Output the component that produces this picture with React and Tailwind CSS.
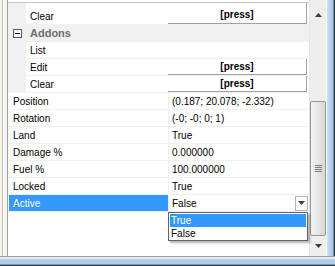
import React from "react";

const ROW = "flex h-[17px] border-b border-[#f0f0f0] leading-[17px]";

const Press = ({ h = "h-[16px]" }) => (
  <div className={`w-[139px] ${h} border-r border-b border-[#a0a0a0] bg-white flex items-center justify-center font-bold`}>
    [press]
  </div>
);

const Arrow = ({ up }) => (
  <svg width="7" height="4" viewBox="0 0 7 4">
    <path d={up ? "M0 4 L3.5 0 L7 4 Z" : "M0 0 L7 0 L3.5 4 Z"} fill="#3c3c3c" />
  </svg>
);

const props = [
  ["Position", "(0.187; 20.078; -2.332)"],
  ["Rotation", "(-0; -0; 0; 1)"],
  ["Land", "True"],
  ["Damage %", "0.000000"],
  ["Fuel %", "100.000000"],
  ["Locked", "True"],
];

export default function App() {
  return (
    <div className="w-[335px] h-[266px] flex flex-col bg-white overflow-hidden font-['Liberation_Sans',Arial,sans-serif] text-[10px] text-black">
      <div className="flex h-[256px]">
        {/* left frame */}
        <div className="flex">
          <div className="w-[2px] bg-[#f5f2ec]" />
          <div className="w-[1px] bg-[#cbbfa6]" />
          <div className="w-[4px] bg-[#f6f6f6]" />
          <div className="w-[1px] bg-[#a0a0a0]" />
        </div>

        {/* grid */}
        <div className="relative w-[301px] flex flex-col">
          <div className="h-[3px] border-b border-[#c8c8c8]" />

          <div className="flex h-[22px] border-b border-[#f0f0f0]">
            <div className="w-[18px] bg-[#f0f0f0]" />
            <div className="w-[142px] pl-[4px] pt-[6px] leading-[16px]">Clear</div>
            <div className="w-[141px] flex">
              <Press h="h-[21px] pt-[2px]" />
            </div>
          </div>

          <div className="flex h-[17px] bg-[#f0f0f0] items-center">
            <div className="w-[18px] flex justify-center">
              <div className="w-[9px] h-[9px] border border-[#5a5a5a] bg-white flex items-center justify-center">
                <div className="w-[5px] h-[1px] bg-black" />
              </div>
            </div>
            <div className="pl-[4px] font-bold text-[11px] text-[#6e6e6e]">Addons</div>
          </div>

          <div className={ROW}>
            <div className="w-[18px] bg-[#f0f0f0]" />
            <div className="w-[142px] pl-[4px]">List</div>
            <div className="w-[141px]" />
          </div>
          <div className={ROW}>
            <div className="w-[18px] bg-[#f0f0f0]" />
            <div className="w-[142px] pl-[4px]">Edit</div>
            <div className="w-[141px] flex">
              <Press />
            </div>
          </div>
          <div className={ROW}>
            <div className="w-[18px] bg-[#f0f0f0]" />
            <div className="w-[142px] pl-[4px]">Clear</div>
            <div className="w-[141px] flex">
              <Press />
            </div>
          </div>

          {props.map(([k, v]) => (
            <div key={k} className={ROW}>
              <div className="w-[1px]" />
              <div className="w-[159px] pl-[4px]">{k}</div>
              <div className="w-[141px] border-l border-[#f0f0f0] pl-[3px]">{v}</div>
            </div>
          ))}

          <div className={ROW}>
            <div className="w-[1px]" />
            <div className="w-[159px] pl-[4px] bg-[#3399ff] text-white">Active</div>
            <div className="w-[141px] border-l border-[#f0f0f0] pl-[3px] flex items-center justify-between">
              <span>False</span>
              <div className="w-[13px] h-[15px] mr-[1px] border border-[#b4b4b4] bg-[#fafafa] flex items-center justify-center">
                <Arrow />
              </div>
            </div>
          </div>

          <div className="flex-1" />

          {/* open dropdown list */}
          <div className="absolute left-[160px] top-[212px] w-[140px] h-[29px] border border-[#646464] bg-white p-[1px] shadow-[2px_2px_2px_rgba(0,0,0,0.3)] leading-[13px]">
            <div className="h-[13px] bg-[#3399ff] text-white pl-[1px]">True</div>
            <div className="h-[13px] pl-[1px]">False</div>
          </div>
        </div>

        {/* scrollbar */}
        <div className="w-[17px] flex flex-col bg-[#eeeeee] border-l border-[#e4e4e4]">
          <div className="h-[30px] flex items-center justify-center">
            <Arrow up />
          </div>
          <div className="flex-1 flex flex-col pt-[71px]">
            <div className="h-[135px] rounded-[2px] border border-[#979797] bg-gradient-to-r from-[#f4f4f4] to-[#d6d6d6] flex items-center justify-center">
              <div className="flex flex-col gap-[1px]">
                <div className="w-[7px] h-[1px] bg-[#7a7a7a]" />
                <div className="w-[7px] h-[1px] bg-[#7a7a7a]" />
                <div className="w-[7px] h-[1px] bg-[#7a7a7a]" />
                <div className="w-[7px] h-[1px] bg-[#7a7a7a]" />
              </div>
            </div>
          </div>
          <div className="h-[18px] flex items-start pt-[6px] justify-center">
            <Arrow />
          </div>
        </div>

        {/* right frame */}
        <div className="flex">
          <div className="w-[1px] bg-[#f8f8f8]" />
          <div className="w-[6px] bg-gradient-to-r from-[#cfe0f2] to-[#a9c6e6]" />
          <div className="w-[1px] bg-[#6f8aa8]" />
          <div className="w-[1px] bg-[#2d3a48]" />
        </div>
      </div>

      {/* bottom frame */}
      <div className="flex flex-col">
        <div className="h-[1px] bg-[#a0a0a0]" />
        <div className="h-[2px] bg-[#e2ecf7]" />
        <div className="h-[5px] bg-[#b3cce8]" />
        <div className="h-[1px] bg-[#7d96b4]" />
        <div className="h-[1px] bg-[#2d3a48]" />
      </div>
    </div>
  );
}
